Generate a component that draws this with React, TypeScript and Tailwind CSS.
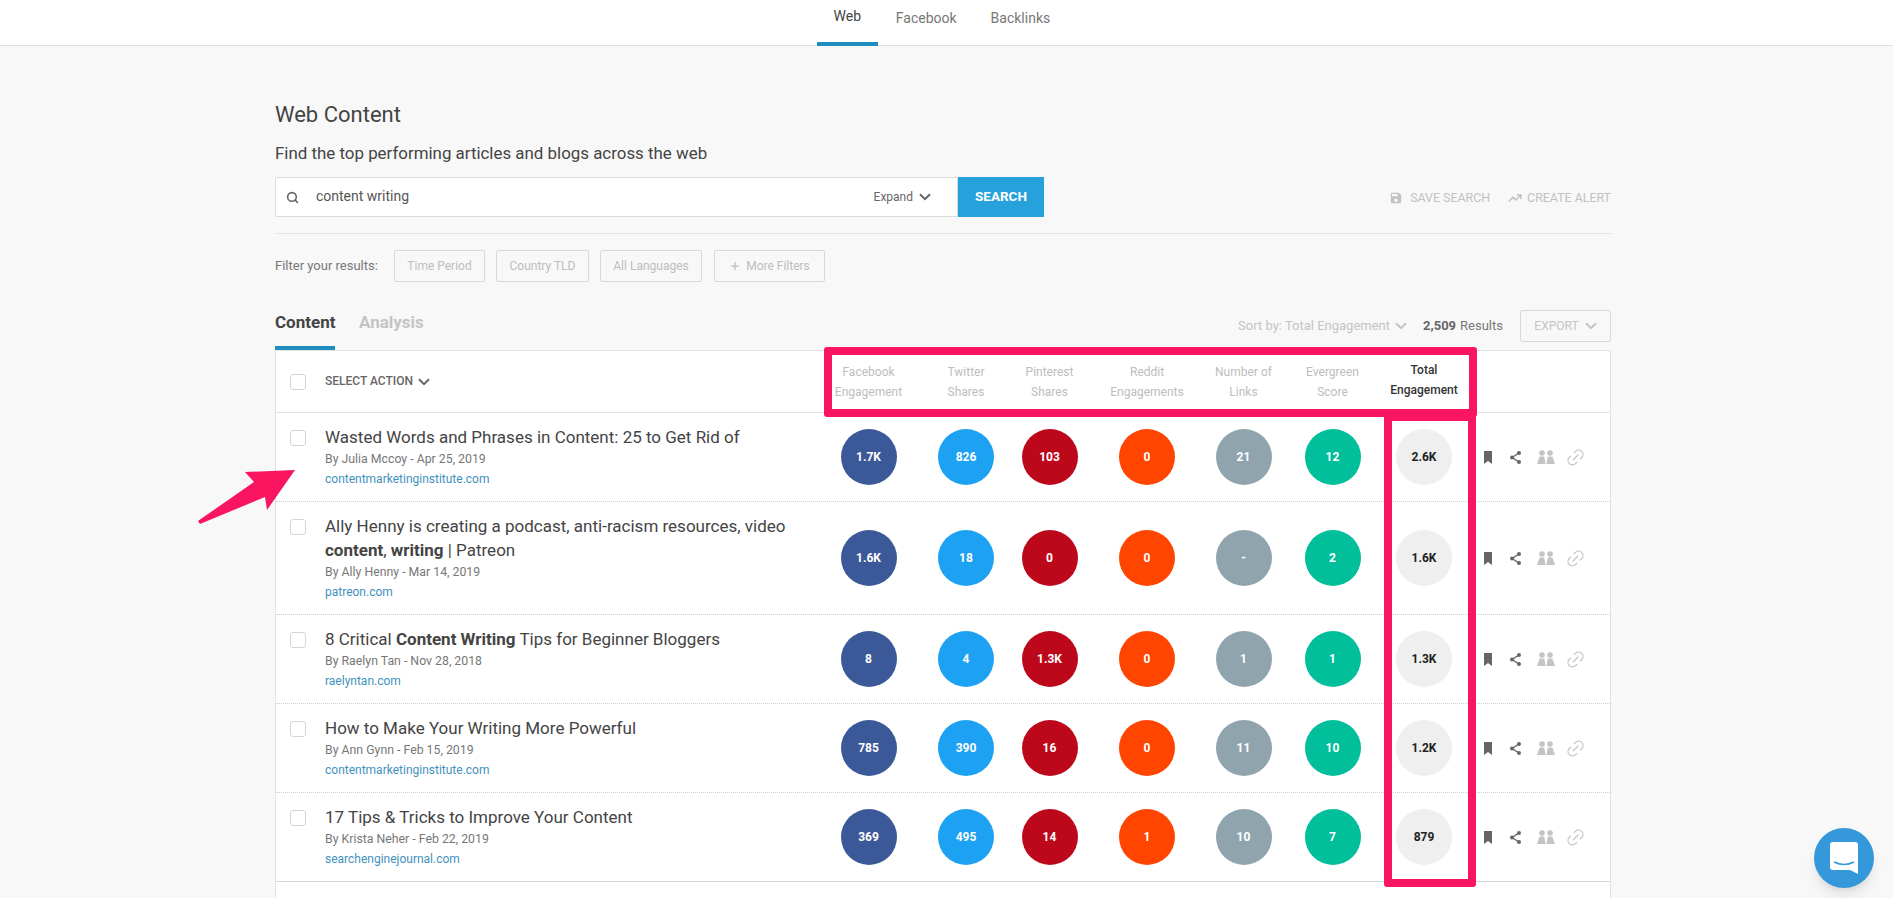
import React from 'react';
import { Link2, Plus, Search, TrendingUp } from 'lucide-react';
import { MdSave } from 'react-icons/md';

// metric columns share these widths between the header and the rows
const colWidths = ['w-[89px]', 'w-[106px]', 'w-[61px]', 'w-[134px]', 'w-[59px]', 'w-[119px]', 'w-[64px]'];

const headers = [
  ['Facebook', 'Engagement'],
  ['Twitter', 'Shares'],
  ['Pinterest', 'Shares'],
  ['Reddit', 'Engagements'],
  ['Number of', 'Links'],
  ['Evergreen', 'Score'],
];

const circleColors = [
  'bg-[#3b5998] text-white',
  'bg-[#1da1f2] text-white',
  'bg-[#bd081c] text-white',
  'bg-[#ff4500] text-white',
  'bg-[#90a4ae] text-white',
  'bg-[#00bf9a] text-white',
  'bg-[#efefef] text-[#222]',
];

const rows: { title: React.ReactNode; meta: string; domain: string; values: string[]; tall?: boolean }[] = [
  {
    title: 'Wasted Words and Phrases in Content: 25 to Get Rid of',
    meta: 'By Julia Mccoy - Apr 25, 2019',
    domain: 'contentmarketinginstitute.com',
    values: ['1.7K', '826', '103', '0', '21', '12', '2.6K'],
  },
  {
    title: (
      <>
        Ally Henny is creating a podcast, anti-racism resources, video <b className="font-bold">content</b>,{' '}
        <b className="font-bold">writing</b> | Patreon
      </>
    ),
    meta: 'By Ally Henny - Mar 14, 2019',
    domain: 'patreon.com',
    values: ['1.6K', '18', '0', '0', '-', '2', '1.6K'],
    tall: true,
  },
  {
    title: (
      <>
        8 Critical <b className="font-bold">Content Writing</b> Tips for Beginner Bloggers
      </>
    ),
    meta: 'By Raelyn Tan - Nov 28, 2018',
    domain: 'raelyntan.com',
    values: ['8', '4', '1.3K', '0', '1', '1', '1.3K'],
  },
  {
    title: 'How to Make Your Writing More Powerful',
    meta: 'By Ann Gynn - Feb 15, 2019',
    domain: 'contentmarketinginstitute.com',
    values: ['785', '390', '16', '0', '11', '10', '1.2K'],
  },
  {
    title: '17 Tips & Tricks to Improve Your Content',
    meta: 'By Krista Neher - Feb 22, 2019',
    domain: 'searchenginejournal.com',
    values: ['369', '495', '14', '1', '10', '7', '879'],
  },
];

function Checkbox() {
  return <span className="block w-4 h-4 shrink-0 rounded-[3px] border border-[#d5d5d5] bg-white" />;
}

function Chevron({ className }: { className: string }) {
  return (
    <svg className={`shrink-0 ${className}`} width="12" height="8" viewBox="0 0 12 8">
      <path d="M1 1.2 L6 6.2 L11 1.2" fill="none" stroke="currentColor" strokeWidth="2" />
    </svg>
  );
}

function FilterButton({ children, className }: { children: React.ReactNode; className: string }) {
  return (
    <div className={`h-8 flex items-center justify-center rounded-[2px] border border-[#d9d9d9] text-[12px] text-[#bdbdbd] ${className}`}>
      {children}
    </div>
  );
}

function RowActions() {
  return (
    <div className="flex items-center pl-[28px]">
      <svg className="shrink-0 text-[#666]" width="8" height="13" viewBox="0 0 8 13">
        <path d="M0 0 H8 V13 L4 10 L0 13 Z" fill="currentColor" />
      </svg>
      <svg className="shrink-0 ml-[18px] text-[#666]" width="11" height="13" viewBox="0 0 11 13">
        <circle cx="9" cy="2" r="2" fill="currentColor" />
        <circle cx="2" cy="6.5" r="2" fill="currentColor" />
        <circle cx="9" cy="11" r="2" fill="currentColor" />
        <path d="M9 2 L2 6.5 L9 11" fill="none" stroke="currentColor" strokeWidth="1.4" />
      </svg>
      <svg className="shrink-0 ml-[16px] text-[#c4c4c4]" width="18" height="14" viewBox="0 0 18 14">
        <circle cx="5" cy="3" r="2.8" fill="currentColor" />
        <circle cx="13" cy="3" r="2.8" fill="currentColor" />
        <path d="M2.6 6.6 H7.2 L8.6 14 H0 Z" fill="currentColor" />
        <path d="M10.8 6.6 H15.4 L18 14 H9.4 Z" fill="currentColor" />
      </svg>
      <Link2 className="w-[21px] h-[21px] ml-[10px] text-[#c4c4c4] -rotate-45 shrink-0" strokeWidth={1.4} />
    </div>
  );
}

function ResultRow({ row }: { row: (typeof rows)[number] }) {
  return (
    <div className={`flex ${row.tall ? 'h-[113px]' : 'h-[89px]'} border-b border-dotted border-[#cfcfcf]`}>
      <div className="w-[548px] shrink-0 flex pl-[14px] pt-[12px]">
        <div className="pt-[5px]">
          <Checkbox />
        </div>
        <div className="ml-[19px] w-[490px]">
          <div className="text-[17px] leading-[24px] text-[#444]">{row.title}</div>
          <div className="text-[12.3px] leading-[18px] mt-[1px] text-[#777]">{row.meta}</div>
          <div className="text-[12px] leading-[18px] mt-[2px] text-[#3f92bd]">{row.domain}</div>
        </div>
      </div>
      {row.values.map((v, i) => (
        <div key={i} className={`${colWidths[i]} shrink-0 flex items-center justify-center`}>
          <div className={`w-14 h-14 shrink-0 rounded-full flex items-center justify-center text-[12px] font-bold ${circleColors[i]}`}>
            {v}
          </div>
        </div>
      ))}
      <RowActions />
    </div>
  );
}

export default function App() {
  return (
    <div className="relative h-[898px] overflow-hidden bg-[#f8f8f8] font-['Roboto',sans-serif]">
      {/* top nav */}
      <div className="h-[46px] bg-white border-b border-[#dedede] flex justify-center">
        <div className="flex ml-[-26px]">
          <div className="w-[61px] h-[46px] border-b-4 border-[#1f8dbd] text-center pt-[6px] text-[14px] text-[#444]">Web</div>
          <div className="ml-[18px] pt-[8px] text-[14px] text-[#777]">Facebook</div>
          <div className="ml-[34px] pt-[8px] text-[14px] text-[#777]">Backlinks</div>
        </div>
      </div>

      <div className="ml-[275px] w-[1336px]">
        <h1 className="mt-[54px] text-[22px] leading-[30px] text-[#444]">Web Content</h1>
        <p className="mt-[11px] text-[16.9px] leading-[24px] text-[#444]">Find the top performing articles and blogs across the web</p>

        {/* search */}
        <div className="mt-[12px] flex items-center">
          <div className="w-[683px] h-10 bg-white border border-[#dcdcdc] rounded-l-[2px] flex items-center pl-[10px]">
            <Search className="w-[13px] h-[13px] text-[#666]" strokeWidth={3} />
            <span className="ml-[17px] mb-[2px] text-[14px] text-[#555]">content writing</span>
            <span className="ml-auto text-[12px] text-[#666]">Expand</span>
            <Chevron className="ml-[6px] mr-[26px] text-[#666]" />
          </div>
          <div className="w-[86px] h-10 pb-[2px] bg-[#27a1db] text-white text-[13.5px] font-bold flex items-center justify-center">SEARCH</div>
          <div className="ml-auto pt-[2px] flex items-center text-[12.4px] text-[#c2c2c2]">
            <MdSave className="w-[14px] h-[14px]" />
            <span className="ml-[7px]">SAVE SEARCH</span>
            <TrendingUp className="w-[14px] h-[14px] ml-[18px]" strokeWidth={2.5} />
            <span className="ml-[5px]">CREATE ALERT</span>
          </div>
        </div>
        <div className="mt-[16px] border-t border-[#e2e2e2]" />

        {/* filters */}
        <div className="mt-[16px] flex items-center">
          <span className="w-[119px] text-[13px] text-[#777]">Filter your results:</span>
          <FilterButton className="w-[91px]">Time Period</FilterButton>
          <FilterButton className="w-[93px] ml-[11px]">Country TLD</FilterButton>
          <FilterButton className="w-[102px] ml-[11px]">All Languages</FilterButton>
          <FilterButton className="w-[111px] ml-[12px]">
            <Plus className="w-[12px] h-[12px] mr-[5px]" strokeWidth={2.5} />
            More Filters
          </FilterButton>
        </div>

        {/* tabs and sort */}
        <div className="mt-[28px] h-[40px] flex items-start">
          <div className="w-[60px] h-[40px] border-b-4 border-[#1f8dbd] text-[17px] leading-[24px] font-bold text-[#444]">Content</div>
          <div className="ml-[24px] text-[17px] leading-[24px] font-bold text-[#c4c4c4]">Analysis</div>
          <div className="ml-auto flex items-center text-[13px] text-[#c4c4c4]">
            <span>Sort by: Total Engagement</span>
            <Chevron className="ml-[5px]" />
            <span className="ml-[16px] font-bold text-[#666]">2,509</span>
            <span className="ml-[4px] text-[#777]">Results</span>
            <div className="ml-[17px] w-[91px] h-8 rounded-[2px] border border-[#d9d9d9] flex items-center justify-center text-[12px]">
              EXPORT
              <Chevron className="ml-[6px]" />
            </div>
          </div>
        </div>

        {/* results table */}
        <div className="h-[600px] bg-white border-l border-r border-t border-[#e3e3e3] rounded-tr-[3px]">
          <div className="h-[62px] flex border-b border-[#e3e3e3]">
            <div className="w-[548px] shrink-0 flex items-center pl-[14px]">
              <Checkbox />
              <span className="ml-[19px] mb-[2px] text-[12px] font-medium text-[#666]">SELECT ACTION</span>
              <Chevron className="ml-[5px] text-[#666]" />
            </div>
            {headers.map((h, i) => (
              <div key={i} className={`${colWidths[i]} shrink-0 flex flex-col items-center justify-center whitespace-nowrap text-[12px] leading-[20px] text-[#bdbdbd]`}>
                <span>{h[0]}</span>
                <span>{h[1]}</span>
              </div>
            ))}
            <div className="w-[64px] shrink-0 flex flex-col items-center justify-center whitespace-nowrap text-[12px] leading-[20px] font-medium text-[#333] pb-[4px]">
              <span>Total</span>
              <span>Engagement</span>
            </div>
          </div>
          {rows.map((row, i) => (
            <ResultRow key={i} row={row} />
          ))}
          <div className="border-t border-[#d5d5d5] -mt-px" />
        </div>
      </div>

      {/* pink annotations drawn over the page */}
      <div className="absolute left-[824px] top-[347px] w-[653px] h-[70px] border-[8px] border-[#f91560] rounded-[3px]" />
      <div className="absolute left-[1384px] top-[413px] w-[92px] h-[474px] border-[8px] border-[#f91560] rounded-[3px]" />
      <svg className="absolute left-[190px] top-[460px]" width="115" height="72" viewBox="190 460 115 72">
        <path d="M295 470 L245 472 L254 482 L198 521 L200 524 L265 497 L267 510 Z" fill="#f91560" />
      </svg>

      {/* chat bubble */}
      <div className="absolute left-[1814px] top-[828px] w-[60px] h-[60px] rounded-full bg-[#3498db] shadow-lg flex items-center justify-center">
        <svg width="28" height="32" viewBox="0 0 28 32">
          <path d="M3 0 H25 Q28 0 28 3 V32 L20 28 H3 Q0 28 0 25 V3 Q0 0 3 0 Z" fill="#fff" />
          <path d="M4 20 Q14 25 24 20" fill="none" stroke="#3498db" strokeWidth="1.5" />
        </svg>
      </div>
    </div>
  );
}
